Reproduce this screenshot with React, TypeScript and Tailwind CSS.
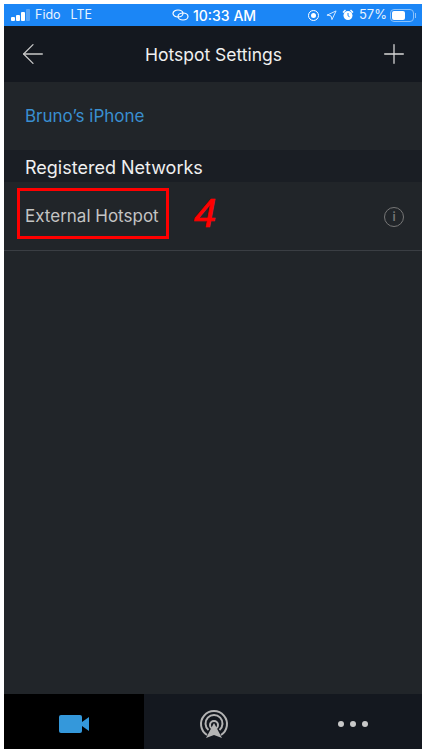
import { ArrowLeft, Plus, Navigation } from 'lucide-react';

function BatteryIcon() {
  return (
    <div className="flex items-center">
      <div className="flex h-[13px] w-[24px] items-center rounded-[4px] border border-[#8cc2fa] p-[1px]">
        <div className="h-full w-[13px] rounded-[2px] bg-white" />
      </div>
      <div className="ml-[1px] h-[5px] w-[1px] bg-[#8cc2fa]" />
    </div>
  );
}

function SignalBars() {
  return (
    <div className="flex items-end gap-[1px]">
      <div className="h-[4px] w-[4px] rounded-[1px] bg-white" />
      <div className="h-[6px] w-[4px] rounded-[1px] bg-white" />
      <div className="h-[9px] w-[4px] rounded-[1px] bg-white" />
      <div className="h-[12px] w-[4px] rounded-[1px] bg-[#5aa6f7]" />
    </div>
  );
}

function HotspotLinkIcon() {
  return (
    <svg width="17" height="12" viewBox="0 0 17 12" fill="none" stroke="white" strokeWidth="1.2">
      <ellipse cx="6" cy="4.5" rx="5" ry="3.5" />
      <ellipse cx="11" cy="7.5" rx="5" ry="3.5" />
    </svg>
  );
}

function AlarmIcon() {
  return (
    <svg width="12" height="12" viewBox="0 0 12 12" fill="white">
      <circle cx="6" cy="6.5" r="4.5" />
      <path d="M0.5 3 L3 0.5 L4 1.5 L1.5 4 Z M11.5 3 L9 0.5 L8 1.5 L10.5 4 Z" />
      <path d="M6 4 V6.8 L7.6 7.8" fill="none" stroke="#1b86f6" strokeWidth="1" />
    </svg>
  );
}

export default function App() {
  return (
    <div className="h-[752px] w-[422px] bg-white pl-[4px] pt-[4px] pb-[3px] font-['Inter',sans-serif]">
      <div className="flex h-full w-full flex-col bg-[#212529]">
        {/* Status bar */}
        <div className="relative flex h-[22px] shrink-0 items-center justify-between bg-[#1b86f6] pl-[7px] pr-[6px] text-[12.5px] text-[#e8f3ff]">
          <div className="flex items-center gap-[5px]">
            <SignalBars />
            <span>Fido</span>
            <span className="ml-[5px]">LTE</span>
          </div>
          <div className="absolute left-[168px] top-0 flex h-full items-center gap-[4px] text-white">
            <HotspotLinkIcon />
            <span className="text-[14px] font-medium">10:33 AM</span>
          </div>
          <div className="flex items-center">
            <div className="flex h-[11px] w-[11px] items-center justify-center rounded-full border border-white">
              <div className="h-[5px] w-[5px] rounded-full bg-white" />
            </div>
            <Navigation size={11} className="ml-[7px]" />
            <div className="ml-[5px]"><AlarmIcon /></div>
            <span className="ml-[5px] text-[13px]">57%</span>
            <div className="ml-[3px]"><BatteryIcon /></div>
          </div>
        </div>

        {/* Nav bar */}
        <div className="flex h-[56px] shrink-0 items-center justify-between bg-[#14181f] pl-[13px] pr-[12px]">
          <ArrowLeft size={32} strokeWidth={0.95} className="text-[#c8c8c8]" />
          <span className="pt-[2px] text-[17.5px] text-[#f0f0f0]">Hotspot Settings</span>
          <Plus size={32} strokeWidth={0.95} className="text-[#d8d8d8]" />
        </div>

        {/* Hotspot name */}
        <div className="flex h-[68px] shrink-0 items-center px-[21px] pt-[2px] text-[17px] text-[#3a8fd0]">Bruno’s iPhone</div>

        {/* Section heading */}
        <div className="flex h-[32px] shrink-0 items-center bg-[#1a1e24] px-[21px] pt-[2px] text-[18px] text-[#f0f0f0]">
          Registered Networks
        </div>

        {/* Network row */}
        <div className="relative flex h-[69px] shrink-0 items-center justify-between border-b border-[#3a3e43] px-[21px] pt-[2px] text-[17px] text-[#c4c4c4]">
          <span>External Hotspot</span>
          <div className="mr-[-3px] flex h-[20px] w-[20px] items-center justify-center rounded-full border-[1.5px] border-[#777]">
            <span className="text-[12px] font-semibold leading-none text-[#777]">i</span>
          </div>
          <div className="absolute left-[13px] top-[6px] h-[51px] w-[152px] border-[3px] border-[#ff0000]" />
          <span className="absolute left-[190px] top-[6px] font-['Liberation_Sans',sans-serif] text-[40px] italic leading-[50px] text-[#ff0000] [-webkit-text-stroke:0.7px_#ff0000]">4</span>
        </div>

        <div className="flex-1" />

        {/* Tab bar */}
        <div className="flex h-[55px] shrink-0 bg-[#14181f]">
          <div className="flex w-[140px] items-center justify-center bg-black pt-[5px]">
            <svg width="30" height="20" viewBox="0 0 30 20">
              <rect x="0" y="1" width="23" height="18" rx="2" fill="#3498db" />
              <path d="M23 8 L30 3 V17 L23 12 Z" fill="#3498db" />
            </svg>
          </div>
          <div className="flex w-[140px] items-center justify-center pt-[6px]">
            <svg width="30" height="30" viewBox="0 0 30 30" fill="none" stroke="#b4b4b4" strokeWidth="2">
              <path d="M8 25 A13 13 0 1 1 22 25" />
              <path d="M9.5 20 A8.5 8.5 0 1 1 20.5 20" />
              <circle cx="15" cy="15" r="4" />
              <path d="M15 13 L23 28 L15 25 L7 28 Z" fill="#b4b4b4" stroke="none" />
            </svg>
          </div>
          <div className="flex flex-1 items-center justify-center gap-[6px] pt-[5px]">
            <div className="h-[6px] w-[6px] rounded-full bg-[#c8c8c8]" />
            <div className="h-[6px] w-[6px] rounded-full bg-[#c8c8c8]" />
            <div className="h-[6px] w-[6px] rounded-full bg-[#c8c8c8]" />
          </div>
        </div>
      </div>
    </div>
  );
}
